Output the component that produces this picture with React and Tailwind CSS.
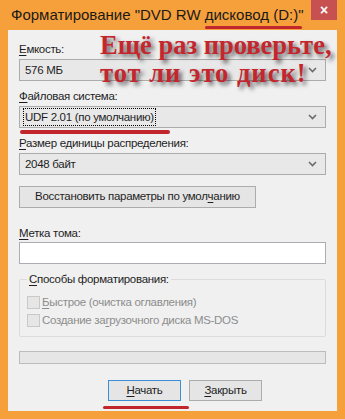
import React from 'react'

const font = { fontFamily: '"Liberation Sans", Arial, sans-serif' }

function U({ children }) {
  return <span className="underline underline-offset-2">{children}</span>
}

function Chevron() {
  return (
    <svg width="9" height="6" viewBox="0 0 9 6" className="shrink-0">
      <path d="M1 1 L4.5 4.5 L8 1" fill="none" stroke="#6b6b6b" strokeWidth="1.6" />
    </svg>
  )
}

function Select({ children, focused }) {
  return (
    <div className="flex h-[22px] items-center justify-between border border-[#acacac] bg-[#e8e8e8] pl-[3px] pr-[8px]">
      <span className={focused ? 'border border-dotted border-black px-[1px] leading-[16px]' : 'px-[2px] leading-[16px]'}>
        {children}
      </span>
      <Chevron />
    </div>
  )
}

function Check({ children }) {
  return (
    <div className="flex h-[13px] items-center gap-[2px] text-[#8d8d8d]">
      <span className="h-[13px] w-[13px] border border-[#c9c9c9] bg-[#e6e6e6]" />
      <span>{children}</span>
    </div>
  )
}

export default function App() {
  return (
    <div className="relative h-[419px] w-[345px] overflow-hidden whitespace-nowrap bg-[#f6a03b] text-[11.5px] tracking-[-0.3px] text-[#1e1e1e]" style={font}>
      <div className="flex h-[30px] items-start justify-between pl-[11px]">
        <div className="pt-[5px] text-[15px] leading-[20px] tracking-normal text-[#1a1a1a]">
          Форматирование "DVD RW <span className="relative">дисковод (D:)<span className="absolute -bottom-[6px] left-0 right-[-4px] h-[3px] rounded bg-[#c0262c]" /></span>"
        </div>
        <div className="mr-[8px] flex h-[20px] w-[26px] items-center justify-center bg-[#c75050] text-[14px] font-bold text-white">
          ×
        </div>
      </div>

      <div className="mx-[8px] flex h-[381px] flex-col bg-[#f0f0f0] px-[11px] pt-[11px]">
        <div className="leading-[16px]"><U>Е</U>мкость:</div>
        <div className="mt-[2px]"><Select>576 МБ</Select></div>

        <div className="mt-[7px] leading-[16px]"><U>Ф</U>айловая система:</div>
        <div className="mt-[2px]"><Select focused>UDF 2.01 (по умолчанию)</Select></div>
        <div className="ml-[1px] mt-[2px] h-[4px] w-[150px] rounded-full bg-[#c0262c]" />

        <div className="mt-[1px] leading-[16px]"><U>Р</U>азмер единицы распределения:</div>
        <div className="mt-[2px]"><Select>2048 байт</Select></div>

        <div className="mt-[11px] flex h-[22px] w-[237px] items-center justify-center border border-[#acacac] bg-[#e5e5e5]">
          Восстановить параметры по умол<U>ч</U>анию
        </div>

        <div className="mt-[17px] leading-[16px]"><U>М</U>етка тома:</div>
        <div className="mt-[1px] h-[22px] border border-[#abadb3] bg-white" />

        <div className="relative mt-[15px] flex h-[58px] flex-col gap-[5px] rounded-[2px] border border-[#dcdcdc] px-[7px] pt-[16px]">
          <span className="absolute -top-[9px] left-[7px] bg-[#f0f0f0] px-[2px] leading-[16px]"><U>С</U>пособы форматирования:</span>
          <Check><U>Б</U>ыстрое (очистка оглавления)</Check>
          <Check>Создание за<U>г</U>рузочного диска MS-DOS</Check>
        </div>

        <div className="mt-[14px] h-[13px] border border-[#bcbcbc] bg-[#e6e6e6]" />

        <div className="mt-[16px] flex justify-center gap-[8px] pl-[25px]">
          <div className="relative flex h-[21px] w-[73px] items-center justify-center border border-[#3c8fd6] bg-[#e5e5e5]">
            <U>Н</U>ачать
            <span className="absolute -bottom-[9px] left-[-6px] h-[3px] w-[86px] rounded bg-[#c0262c]" />
          </div>
          <div className="flex h-[21px] w-[73px] items-center justify-center border border-[#acacac] bg-[#e5e5e5]">
            <U>З</U>акрыть
          </div>
        </div>
      </div>

      <div
        className="absolute left-[100px] top-[31px] text-[26.5px] font-bold leading-[28px] tracking-normal text-[#c4262e]"
        style={{ fontFamily: '"Liberation Serif", "DejaVu Serif", serif', textShadow: '3px 3px 4px rgba(0,0,0,0.6)' }}
      >
        Ещё раз проверьте,
        <br />
        <span className="tracking-[1px]">тот ли это диск!</span>
      </div>
    </div>
  )
}
